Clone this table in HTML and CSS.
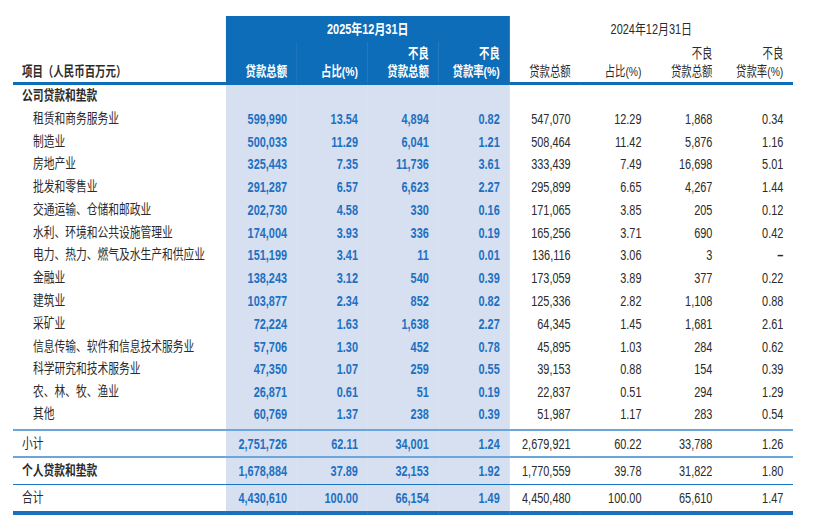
FILE: index.html
```html
<!DOCTYPE html>
<html lang="zh">
<head>
<meta charset="utf-8">
<title>贷款结构</title>
<link rel="stylesheet" href="styles.css">
</head>
<body>
<div class="wrap">
<table class="t">
  <colgroup>
    <col class="c-label">
    <col class="c-num"><col class="c-num"><col class="c-num"><col class="c-num">
    <col class="c-num"><col class="c-num"><col class="c-num"><col class="c-num">
  </colgroup>
  <thead>
    <tr class="h1">
      <th class="lbl"></th>
      <th class="cur yr" colspan="4">2025年12月31日</th>
      <th class="prev yr" colspan="4">2024年12月31日</th>
    </tr>
    <tr class="h2">
      <th class="lbl">项目（人民币百万元）</th>
      <th class="cur">贷款总额</th>
      <th class="cur">占比(%)</th>
      <th class="cur">不良<br>贷款总额</th>
      <th class="cur">不良<br>贷款率(%)</th>
      <th class="prev">贷款总额</th>
      <th class="prev">占比(%)</th>
      <th class="prev">不良<br>贷款总额</th>
      <th class="prev">不良<br>贷款率(%)</th>
    </tr>
  </thead>
  <tbody>
    <tr class="grp"><td class="lbl b">公司贷款和垫款</td><td class="cur"></td><td class="cur"></td><td class="cur"></td><td class="cur"></td><td></td><td></td><td></td><td></td></tr>
    <tr class="r"><td class="lbl sub">租赁和商务服务业</td><td class="cur">599,990</td><td class="cur">13.54</td><td class="cur">4,894</td><td class="cur">0.82</td><td>547,070</td><td>12.29</td><td>1,868</td><td>0.34</td></tr>
    <tr class="r"><td class="lbl sub">制造业</td><td class="cur">500,033</td><td class="cur">11.29</td><td class="cur">6,041</td><td class="cur">1.21</td><td>508,464</td><td>11.42</td><td>5,876</td><td>1.16</td></tr>
    <tr class="r"><td class="lbl sub">房地产业</td><td class="cur">325,443</td><td class="cur">7.35</td><td class="cur">11,736</td><td class="cur">3.61</td><td>333,439</td><td>7.49</td><td>16,698</td><td>5.01</td></tr>
    <tr class="r"><td class="lbl sub">批发和零售业</td><td class="cur">291,287</td><td class="cur">6.57</td><td class="cur">6,623</td><td class="cur">2.27</td><td>295,899</td><td>6.65</td><td>4,267</td><td>1.44</td></tr>
    <tr class="r"><td class="lbl sub">交通运输、仓储和邮政业</td><td class="cur">202,730</td><td class="cur">4.58</td><td class="cur">330</td><td class="cur">0.16</td><td>171,065</td><td>3.85</td><td>205</td><td>0.12</td></tr>
    <tr class="r"><td class="lbl sub">水利、环境和公共设施管理业</td><td class="cur">174,004</td><td class="cur">3.93</td><td class="cur">336</td><td class="cur">0.19</td><td>165,256</td><td>3.71</td><td>690</td><td>0.42</td></tr>
    <tr class="r"><td class="lbl sub">电力、热力、燃气及水生产和供应业</td><td class="cur">151,199</td><td class="cur">3.41</td><td class="cur">11</td><td class="cur">0.01</td><td>136,116</td><td>3.06</td><td>3</td><td class="dash">–</td></tr>
    <tr class="r"><td class="lbl sub">金融业</td><td class="cur">138,243</td><td class="cur">3.12</td><td class="cur">540</td><td class="cur">0.39</td><td>173,059</td><td>3.89</td><td>377</td><td>0.22</td></tr>
    <tr class="r"><td class="lbl sub">建筑业</td><td class="cur">103,877</td><td class="cur">2.34</td><td class="cur">852</td><td class="cur">0.82</td><td>125,336</td><td>2.82</td><td>1,108</td><td>0.88</td></tr>
    <tr class="r"><td class="lbl sub">采矿业</td><td class="cur">72,224</td><td class="cur">1.63</td><td class="cur">1,638</td><td class="cur">2.27</td><td>64,345</td><td>1.45</td><td>1,681</td><td>2.61</td></tr>
    <tr class="r"><td class="lbl sub">信息传输、软件和信息技术服务业</td><td class="cur">57,706</td><td class="cur">1.30</td><td class="cur">452</td><td class="cur">0.78</td><td>45,895</td><td>1.03</td><td>284</td><td>0.62</td></tr>
    <tr class="r"><td class="lbl sub">科学研究和技术服务业</td><td class="cur">47,350</td><td class="cur">1.07</td><td class="cur">259</td><td class="cur">0.55</td><td>39,153</td><td>0.88</td><td>154</td><td>0.39</td></tr>
    <tr class="r"><td class="lbl sub">农、林、牧、渔业</td><td class="cur">26,871</td><td class="cur">0.61</td><td class="cur">51</td><td class="cur">0.19</td><td>22,837</td><td>0.51</td><td>294</td><td>1.29</td></tr>
    <tr class="r last"><td class="lbl sub">其他</td><td class="cur">60,769</td><td class="cur">1.37</td><td class="cur">238</td><td class="cur">0.39</td><td>51,987</td><td>1.17</td><td>283</td><td>0.54</td></tr>
    <tr class="sum"><td class="lbl">小计</td><td class="cur">2,751,726</td><td class="cur">62.11</td><td class="cur">34,001</td><td class="cur">1.24</td><td>2,679,921</td><td>60.22</td><td>33,788</td><td>1.26</td></tr>
    <tr class="pers"><td class="lbl b">个人贷款和垫款</td><td class="cur">1,678,884</td><td class="cur">37.89</td><td class="cur">32,153</td><td class="cur">1.92</td><td>1,770,559</td><td>39.78</td><td>31,822</td><td>1.80</td></tr>
    <tr class="tot"><td class="lbl">合计</td><td class="cur">4,430,610</td><td class="cur">100.00</td><td class="cur">66,154</td><td class="cur">1.49</td><td>4,450,480</td><td>100.00</td><td>65,610</td><td>1.47</td></tr>
  </tbody>
</table>
</div>
</body>
</html>
```
FILE: styles.css
```css
html, body {
  margin: 0;
  padding: 0;
  background: #ffffff;
}

body {
  font-family: "Liberation Sans", "Noto Sans CJK SC", sans-serif;
  color: #2b2b2b;
}

.wrap {
  height: 531px;
  overflow: hidden;
}

/* The source table is set in a condensed face; the whole table is
   compressed horizontally to reproduce that (layout width 1000px -> 780px). */
.t {
  margin: 16px 0 0 13px;
  width: 1000px;
  border-collapse: collapse;
  table-layout: fixed;
  font-size: 14px;
  transform: scaleX(0.78);
  transform-origin: 0 0;
}

.c-label { width: 273px; }
.c-num { width: 90.875px; }

th, td {
  padding: 0 12.5px 0 0;
  text-align: right;
  white-space: nowrap;
  font-weight: normal;
}

th {
  font-size: 13.3px;
  line-height: 18px;
  vertical-align: bottom;
}

.h1 th { height: 26px; vertical-align: middle; }
.h1 .yr { text-align: center; padding: 0; font-size: 14px; }
.h2 th { height: 39px; padding-bottom: 1px; border-bottom: 3px solid #0d6db8; }

th.cur {
  background: #0d6db8;
  color: #ffffff;
  font-weight: bold;
}

th.prev { color: #2b2b2b; }

th.lbl {
  text-align: left;
  padding-left: 11.5px;
  font-weight: bold;
  font-size: 13.4px;
}

td {
  height: 22.77px;
  line-height: 16px;
  vertical-align: middle;
}

td.cur {
  background: #d6e0f1;
  color: #1f70c1;
  font-weight: bold;
}

td.lbl {
  text-align: left;
  padding-left: 11.5px;
  font-size: 13.8px;
}

td.sub { padding-left: 25.5px; }
td.b { font-weight: bold; }

.grp td { height: 22.5px; }
.last td { height: 25.77px; vertical-align: top; line-height: 22.77px; }

.sum td { height: 25px; border-top: 2px solid #6aa6dc; }
.pers td { height: 26px; border-top: 2px solid #6aa6dc; }
.tot td { height: 26px; border-top: 1px solid #1a74c4; border-bottom: 4px solid #1a6fbe; }

td.dash { font-weight: bold; }
```
